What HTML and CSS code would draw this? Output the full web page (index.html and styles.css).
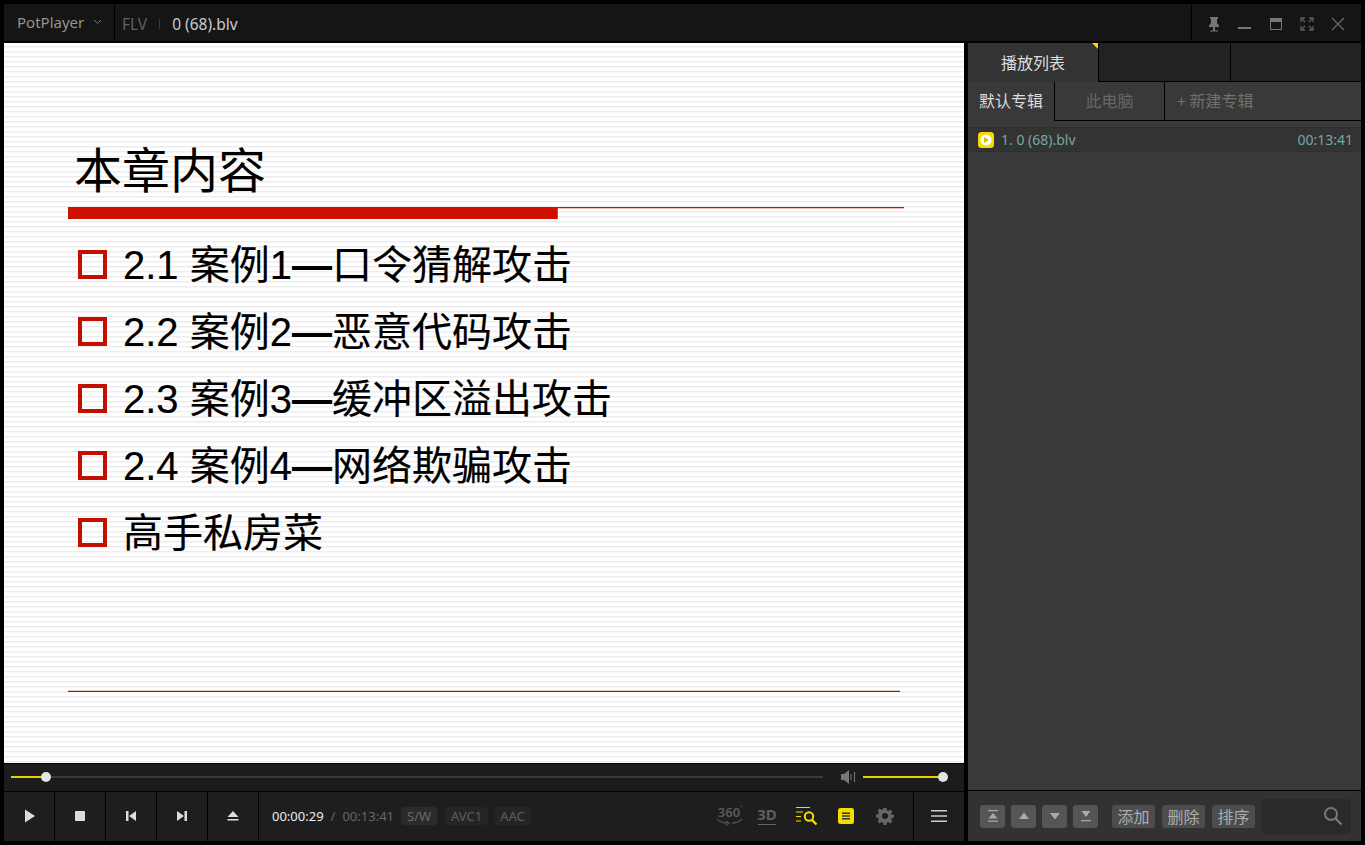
FILE: index.html
```html
<!DOCTYPE html>
<html lang="zh">
<head>
<meta charset="utf-8">
<title>PotPlayer</title>
<link rel="stylesheet" href="styles.css">
</head>
<body>
<div class="window">
  <header class="titlebar">
    <div class="brand"><span>PotPlayer</span>
      <svg class="chev" width="9" height="6" viewBox="0 0 9 6"><path d="M1 1l3.500 3.500L8 1" fill="none" stroke="#777" stroke-width="1"/></svg>
    </div>
    <div class="fileinfo"><span class="fmt">FLV</span><i class="tick"></i><span class="fname">0 (68).blv</span></div>
    <div class="winbtns">
      <svg width="16" height="16" viewBox="0 0 16 16"><path d="M4 1h8v1.500l-1 .5v4l2 2.500V11H9v3.500H12V15.500H4V14.500h3V11H3V9.500L5 7V3l-1-.5z" fill="#777"/></svg>
      <svg width="16" height="16" viewBox="0 0 16 16"><rect x="1" y="11" width="13" height="2" fill="#777"/></svg>
      <svg width="16" height="16" viewBox="0 0 16 16"><path d="M2 2h12v12H2zM3 6v7h10V6z" fill="#777" fill-rule="evenodd"/></svg>
      <svg width="16" height="16" viewBox="0 0 16 16"><path d="M2 6V2h4M10 2h4v4M14 10v4h-4M6 14H2v-4M3 3l3 3M13 3l-3 3M13 13l-3-3M3 13l3-3" fill="none" stroke="#5c5c5c" stroke-width="1.300"/></svg>
      <svg width="16" height="16" viewBox="0 0 16 16"><path d="M2 2l12 12M14 2L2 14" fill="none" stroke="#666" stroke-width="1.400"/></svg>
    </div>
  </header>
  <div class="main">
    <div class="left">
      <main class="video">
        <h1 class="slide-title">本章内容</h1>
        <div class="rule"><div class="rule-bar"></div></div>
        <ul class="points">
          <li><i class="sq"></i><span class="pt">2.1 案例1<b class="dash">—</b>口令猜解攻击</span></li>
          <li><i class="sq"></i><span class="pt">2.2 案例2<b class="dash">—</b>恶意代码攻击</span></li>
          <li><i class="sq"></i><span class="pt">2.3 案例3<b class="dash">—</b>缓冲区溢出攻击</span></li>
          <li><i class="sq"></i><span class="pt">2.4 案例4<b class="dash">—</b>网络欺骗攻击</span></li>
          <li><i class="sq"></i><span class="pt">高手私房菜</span></li>
        </ul>
        <div class="foot-rule"></div>
      </main>
      <div class="seekrow">
        <div class="track seek"><div class="fill seek-fill"></div><i class="knob"></i></div>
        <svg class="vol-ico" width="16" height="14" viewBox="0 0 16 14"><path d="M0 4h3l5-4v14l-5-4H0z" fill="#777"/><path d="M10 4v6M13.500 2v10" stroke="#777" stroke-width="1"/></svg>
        <div class="track vol"><div class="fill vol-fill"></div><i class="knob"></i></div>
      </div>
      <div class="controls">
        <button class="cbtn"><svg width="14" height="14" viewBox="0 0 14 14"><path d="M3 .5l10 6.500-10 6.500z" fill="#ddd"/></svg></button>
        <button class="cbtn"><svg width="12" height="12" viewBox="0 0 12 12"><rect x="1" y="1" width="10" height="10" rx="1" fill="#ddd"/></svg></button>
        <button class="cbtn"><svg width="12" height="12" viewBox="0 0 12 12"><path d="M1 1h2.500v10H1zM11 1v10L4 6z" fill="#ddd"/></svg></button>
        <button class="cbtn"><svg width="12" height="12" viewBox="0 0 12 12"><path d="M11 1H8.500v10H11zM1 1v10l7-5z" fill="#ddd"/></svg></button>
        <button class="cbtn"><svg width="12" height="12" viewBox="0 0 12 12"><path d="M6 1l5.500 6H.5zM.5 9h11v1.500H.5z" fill="#ddd"/></svg></button>
        <div class="times"><span class="t-now">00:00:29</span><span class="t-sl">/</span><span class="t-all">00:13:41</span></div>
        <span class="chip chip-sw">S/W</span><span class="chip chip-avc">AVC1</span><span class="chip chip-aac">AAC</span>
        <div class="tools">
          <svg class="ic360" width="28" height="24" viewBox="0 0 28 24"><text x="13" y="13" text-anchor="middle" class="t360">360</text><circle cx="25.500" cy="2.500" r=".8" fill="#555"/><path d="M1 15c3 3 7 4 10 4M26 15c-3 3-7 4-10 4M10 17l3 2.500-3 2" fill="none" stroke="#555" stroke-width="1.100"/></svg>
          <svg class="ic3d" width="22" height="24" viewBox="0 0 22 24"><text x="11" y="16" text-anchor="middle" class="t3d">3D</text><rect x="2" y="20" width="18" height="1" fill="#666"/></svg>
          <svg class="icsr" width="24" height="20" viewBox="0 0 24 20"><path d="M1 1.500h14M1 6h7M1 10.500h5M1 15h5" stroke="#f5dc00" stroke-width="1.200"/><circle cx="14" cy="10.500" r="4.200" fill="none" stroke="#f5dc00" stroke-width="2"/><path d="M17 14l4.500 4.500" stroke="#f5dc00" stroke-width="2.400"/></svg>
          <svg class="icnt" width="16" height="18" viewBox="0 0 16 18"><rect y="1" width="16" height="16" rx="2.500" fill="#f5dc00"/><path d="M4 5.500h8v1.500H4zM4 8.200h8v1.500H4zM4 10.900h8v1.500H4z" fill="#333"/></svg>
          <svg class="icgr" width="18" height="18" viewBox="0 0 18 18"><path d="M7.500 1h3l.4 2.300 1.500.6 1.900-1.300 2.100 2.100-1.300 1.900.6 1.500L18 7.500v3l-2.300.4-.6 1.500 1.300 1.900-2.100 2.100-1.900-1.300-1.500.6-.4 2.300h-3l-.4-2.300-1.500-.6-1.900 1.300-2.100-2.100 1.300-1.900-.6-1.500L0 10.500v-3l2.300-.4.6-1.500L1.600 3.700l2.100-2.100 1.900 1.300 1.500-.6zM9 6a3 3 0 100 6 3 3 0 000-6z" fill="#666" fill-rule="evenodd"/></svg>
        </div>
        <button class="cbtn menu"><svg width="16" height="14" viewBox="0 0 16 14"><path d="M0 1h16v1.400H0zM0 6.300h16v1.400H0zM0 11.600h16V13H0z" fill="#ccc"/></svg></button>
      </div>
    </div>
    <aside class="panel">
      <div class="tabs">
        <div class="tab active">播放列表<i class="corner"></i></div>
        <div class="tab wide"></div>
        <div class="tab rest"></div>
      </div>
      <div class="subtabs">
        <div class="sub on">默认专辑</div>
        <div class="sub mid">此电脑</div>
        <div class="sub newalb">+ 新建专辑</div>
      </div>
      <div class="list">
        <div class="item">
          <svg width="16" height="16" viewBox="0 0 16 16"><rect width="16" height="16" rx="3.500" fill="#f5dc00"/><circle cx="8" cy="8" r="5.500" fill="#fff"/><path d="M6 5l5 3-5 3z" fill="#e8b400"/></svg>
          <span class="item-name">1. 0 (68).blv</span><span class="item-time">00:13:41</span>
        </div>
      </div>
      <div class="panelbar">
        <button class="pbtn"><svg width="12" height="12" viewBox="0 0 12 12"><path d="M1 0h10v1.300H1zM6 3l4.500 5.500h-9zM1 10.500h10v1.300H1z" fill="#aaa"/></svg></button>
        <button class="pbtn"><svg width="12" height="10" viewBox="0 0 12 10"><path d="M6 1.500l5 6.500H1z" fill="#aaa"/></svg></button>
        <button class="pbtn"><svg width="12" height="10" viewBox="0 0 12 10"><path d="M6 8.500l5-6.500H1z" fill="#aaa"/></svg></button>
        <button class="pbtn"><svg width="12" height="12" viewBox="0 0 12 12"><path d="M1.500 1h9L6 7zM1 10h10v1.300H1z" fill="#aaa"/></svg></button>
        <button class="tbtn first">添加</button><button class="tbtn">删除</button><button class="tbtn">排序</button>
        <div class="search"><svg width="20" height="20" viewBox="0 0 20 20"><circle cx="8" cy="8" r="6" fill="none" stroke="#777" stroke-width="2"/><path d="M12.500 12.500l6 6" stroke="#777" stroke-width="2.400"/></svg></div>
      </div>
    </aside>
  </div>
</div>
</body>
</html>
```
FILE: styles.css
```css
* { box-sizing: border-box; }
html, body { margin: 0; height: 100%; background: #000; overflow: hidden; }
body { font-family: "Noto Sans", "Noto Sans CJK SC", sans-serif; }
.window { width: 1365px; height: 845px; padding: 4px; display: flex; flex-direction: column; }

.titlebar { height: 37px; background: #151515; display: flex; align-items: center; flex: none; }
.brand { width: 111px; height: 100%; display: flex; align-items: center; padding-left: 13px; padding-bottom: 1px; gap: 9px; border-right: 1px solid #000; color: #939393; font-size: 15px; }
.fileinfo { display: flex; align-items: center; padding-left: 7px; padding-top: 2px; font-size: 15.500px; flex: 1; }
.fmt { color: #5f5f5f; }
.tick { width: 1px; height: 10px; background: #3a3a3a; margin: 0 12px 0 12px; }
.fname { color: #c8ccd0; }
.winbtns { width: 170px; height: 100%; border-left: 1px solid #000; display: flex; align-items: center; padding-left: 14px; padding-top: 2px; gap: 15px; }

.main { flex: 1; display: flex; margin-top: 2px; gap: 4px; min-height: 0; }
.left { width: 960px; display: flex; flex-direction: column; }
.video { height: 720px; flex: none; padding: 92px 60px 0 64px; background: repeating-linear-gradient(to bottom, #fff 0, #fff 3px, #ededed 3px, #ededed 4px, #f6f6f6 4px, #f6f6f6 5px); color: #000; font-family: "Liberation Sans", "Noto Sans CJK SC", sans-serif; }
.slide-title { margin: 0 0 0 6px; font-weight: 400; font-size: 48px; line-height: 74px; height: 72px; }
.rule { height: 12px; background: linear-gradient(to bottom, #a81c14 0, #a81c14 1px, #efc4bc 1px, #efc4bc 2px, transparent 2px); }
.rule-bar { width: 489px; height: 12px; background: #cf0f00; box-shadow: 1px 0 0 #a8584c; }
.points { list-style: none; margin: 12px 0 0; padding: 0; }
.points li { height: 67px; display: flex; align-items: center; font-size: 40px; white-space: nowrap; padding-left: 10px; }
.pt { padding-bottom: 6px; -webkit-text-stroke: 0.15px #000; }
.dash { font-weight: 700; }
.sq { width: 29px; height: 29px; border: 4px solid #c21000; margin-right: 16px; flex: none; }
.foot-rule { margin-top: 124px; width: 832px; height: 2px; background: linear-gradient(to bottom, #efc4bc 0, #efc4bc 1px, #a81c14 1px, #a81c14 2px); }

.seekrow { height: 27px; margin-top: 1px; background: #1c1c1c; display: flex; align-items: center; padding: 0 21px 0 7px; }
.track { height: 2px; background: #3a3a3a; position: relative; }
.seek { width: 813px; }
.seek-fill { width: 35px; }
.vol { width: 80px; margin-left: 6px; }
.vol-fill { width: 100%; }
.vol-ico { margin-left: 18px; flex: none; }
.fill { height: 2px; background: #e6cf00; }
.knob { position: absolute; width: 10px; height: 10px; border-radius: 50%; background: #e4e4e4; top: -4px; }
.seek .knob { left: 30px; }
.vol .knob { right: -5px; }

.controls { height: 51px; border-top: 1px solid #000; background: #1e1e1e; display: flex; align-items: center; color: #888; }
.cbtn { width: 51px; height: 100%; padding: 0; background: none; border: 0; border-right: 1px solid #000; display: flex; align-items: center; justify-content: center; flex: none; }
.times { padding-left: 13px; font-size: 13px; display: flex; width: 142px; }
.t-now { color: #e8ecf0; }
.t-sl { color: #666; margin: 0 7px; }
.t-all { color: #666; }
.chip { font-size: 13px; line-height: 18px; height: 18px; padding: 0 6px; background: #252525; color: #5e5e5e; border-radius: 3px; margin-right: 8px; }
.chip-sw { background: #2b2b2b; color: #6a6a6a; }
.chip-avc { margin-right: 7px; }
.chip-aac { padding: 0 5px; }
.tools { flex: 1; display: flex; align-items: center; justify-content: flex-end; padding-right: 19px; }
.ic3d { margin-left: 12px; }
.icsr { margin-left: 17px; }
.icnt { margin-left: 19px; }
.icgr { margin-left: 22px; }
.t360 { font: 600 13px "Noto Sans", sans-serif; fill: #5a5a5a; }
.t3d { font: 700 15px "Noto Sans", sans-serif; fill: #5e5e5e; }
.menu { border-right: 0; border-left: 1px solid #000; }

.panel { width: 393px; display: flex; flex-direction: column; background: #393939; font-family: "Noto Sans CJK SC", "Noto Sans", sans-serif; font-size: 16px; }
.tabs { height: 39px; display: flex; background: #222; border-bottom: 1px solid #000; flex: none; }
.tab { height: 38px; border-right: 1px solid #000; }
.tab.active { width: 131px; height: 39px; background: #333; color: #ddd; text-align: center; line-height: 38px; position: relative; }
.tab.wide { width: 132px; }
.tab.rest { flex: 1; border-right: 0; }
.corner { position: absolute; top: 0; right: 0; width: 0; height: 0; border-top: 6px solid #f5dc00; border-left: 6px solid transparent; }
.subtabs { height: 39px; display: flex; flex: none; background: #393939; }
.sub { height: 39px; line-height: 37px; text-align: center; border-bottom: 1px solid #000; border-right: 1px solid #000; color: #666; }
.sub.on { width: 87px; color: #ddd; border-bottom: 0; }
.sub.mid { width: 110px; }
.sub.newalb { flex: 1; text-align: left; padding-left: 12px; border-right: 0; color: #707070; }
.list { flex: 1; padding-top: 6px; min-height: 0; }
.item { height: 25px; background: #333; border-top: 1px solid #2f2f2f; border-bottom: 1px solid #2f2f2f; display: flex; align-items: center; padding: 0 8px 0 10px; color: #74a8a4; font-size: 14px; }
.item-name { margin-left: 7px; flex: 1; font-family: "Noto Sans", sans-serif; }
.item-time { font-family: "Noto Sans", sans-serif; }
.panelbar { height: 51px; background: #323232; border-top: 1px solid #000; flex: none; display: flex; align-items: center; padding-left: 12px; }
.pbtn { width: 25px; height: 23px; padding: 0; border: 0; border-radius: 3px; background: #555; margin-right: 6px; display: flex; align-items: center; justify-content: center; }
.tbtn { width: 43px; height: 23px; padding: 0; border: 0; border-radius: 3px; background: #4d4d4d; color: #a8adb0; font: 16px/23px "Noto Sans CJK SC", sans-serif; margin-right: 7px; }
.tbtn.first { margin-left: 8px; }
.search { width: 89px; height: 35px; background: #2a2a2a; border-radius: 4px; display: flex; align-items: center; justify-content: flex-end; padding-right: 8px; }
```
